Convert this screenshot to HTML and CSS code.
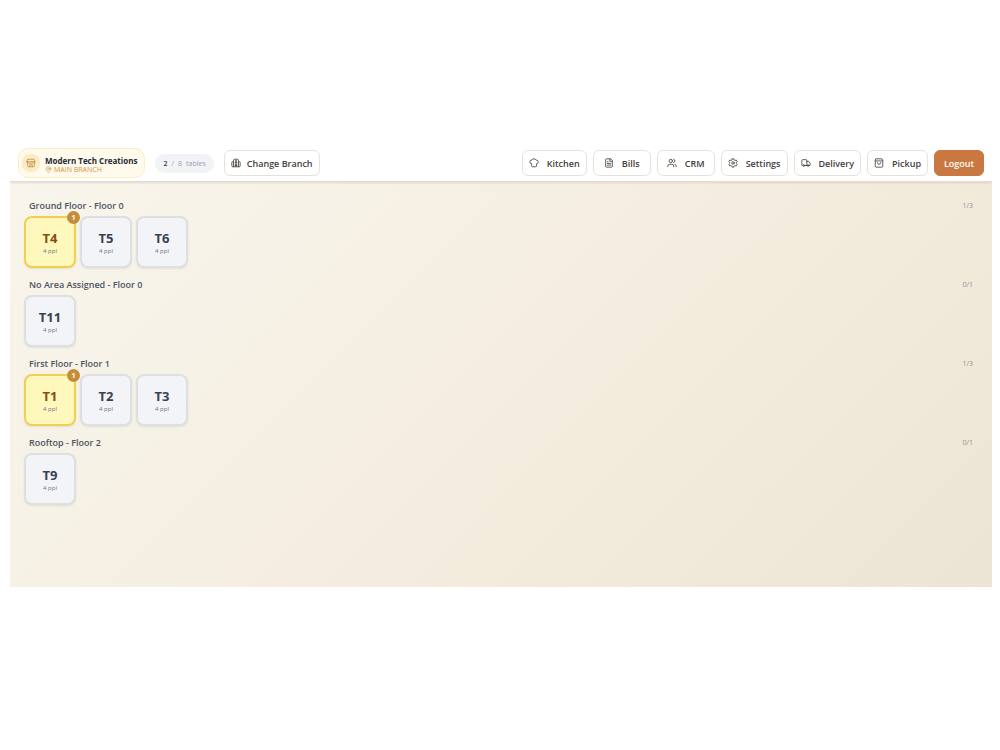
FILE: index.html
```
<!DOCTYPE html>
<html lang="en">
<head>
  <meta charset="UTF-8">
  <meta name="viewport" content="width=device-width, initial-scale=1.0">
  <title>Modern Tech Creations - Tables</title>
  <link rel="stylesheet" href="styles.css">
</head>
<body>
  <div class="app">
    <header class="topbar">
      <div class="brand">
        <span class="brand-icon">
          <svg class="icon" viewBox="0 0 24 24"><path d="M4 10v9a2 2 0 0 0 2 2h12a2 2 0 0 0 2-2v-9M5 3h14l3 6H2zM2 9a3 3 0 0 0 5 2 3 3 0 0 0 5 0 3 3 0 0 0 5 0 3 3 0 0 0 5-2M9 21v-5h6v5"/></svg>
        </span>
        <div class="brand-text">
          <h1>Modern Tech Creations</h1>
          <p>
            <svg class="icon" viewBox="0 0 24 24"><path d="M20 10c0 5-5.500 10-8 12-2.500-2-8-7-8-12a8 8 0 0 1 16 0z"/><circle cx="12" cy="10" r="3"/></svg>
            MAIN BRANCH
          </p>
        </div>
      </div>
      <div class="count"><strong>2</strong> <span>/</span> <span>8</span> <span>tables</span></div>
      <button type="button" class="btn btn-branch">
        <svg class="icon" viewBox="0 0 24 24"><path d="M6 21V6a3 3 0 0 1 3-3h6a3 3 0 0 1 3 3v15M6 9H4a2 2 0 0 0-2 2v8a2 2 0 0 0 2 2h16a2 2 0 0 0 2-2v-8a2 2 0 0 0-2-2h-2M10 7h4M10 11h4M10 15h4M10 18h4M12 6v15"/></svg>
        Change Branch
      </button>

      <nav class="actions">
        <button type="button" class="btn">
          <svg class="icon" viewBox="0 0 24 24"><path d="M6 14a4.500 4.500 0 0 1 1-9 5.500 5.500 0 0 1 10 0 4.500 4.500 0 0 1 1 9v5a2 2 0 0 1-2 2H8a2 2 0 0 1-2-2z"/></svg>
          Kitchen
        </button>
        <button type="button" class="btn">
          <svg class="icon" viewBox="0 0 24 24"><path d="M15 2H6a2 2 0 0 0-2 2v16a2 2 0 0 0 2 2h12a2 2 0 0 0 2-2V7zM14 2v6h6M8 9h2M8 13h8M8 17h8"/></svg>
          Bills
        </button>
        <button type="button" class="btn">
          <svg class="icon" viewBox="0 0 24 24"><path d="M16 21v-2a4 4 0 0 0-4-4H6a4 4 0 0 0-4 4v2M22 21v-2a4 4 0 0 0-3-3.900M16 3.100a4 4 0 0 1 0 7.800"/><circle cx="9" cy="7" r="4"/></svg>
          CRM
        </button>
        <button type="button" class="btn">
          <svg class="icon" viewBox="0 0 24 24"><path d="M10 2h4l1 3 2 1 3-1 2 4-2 2v2l2 2-2 4-3-1-2 1-1 3h-4l-1-3-2-1-3 1-2-4 2-2v-2L2 9l2-4 3 1 2-1z"/><circle cx="12" cy="12" r="3"/></svg>
          Settings
        </button>
        <button type="button" class="btn">
          <svg class="icon" viewBox="0 0 24 24"><path d="M14 18V6a2 2 0 0 0-2-2H4a2 2 0 0 0-2 2v11a1 1 0 0 0 1 1h2M15 18H9M19 18h2a1 1 0 0 0 1-1v-4l-4-5h-4"/><circle cx="17" cy="18" r="2"/><circle cx="7" cy="18" r="2"/></svg>
          Delivery
        </button>
        <button type="button" class="btn">
          <svg class="icon" viewBox="0 0 24 24"><path d="M5 2h14l2 4v14a2 2 0 0 1-2 2H5a2 2 0 0 1-2-2V6zM3 7h18M8 11a4 4 0 0 0 8 0"/></svg>
          Pickup
        </button>
        <button type="button" class="btn btn-logout">Logout</button>
      </nav>
    </header>

    <main class="floors">
      <section class="floor">
        <div class="floor-head">
          <h2>Ground Floor - Floor 0</h2>
          <span class="floor-count">1/3</span>
        </div>
        <div class="tables">
          <button type="button" class="table busy">T4 <small>4 ppl</small><span class="badge">1</span></button>
          <button type="button" class="table">T5 <small>4 ppl</small></button>
          <button type="button" class="table">T6 <small>4 ppl</small></button>
        </div>
      </section>

      <section class="floor">
        <div class="floor-head">
          <h2>No Area Assigned - Floor 0</h2>
          <span class="floor-count">0/1</span>
        </div>
        <div class="tables">
          <button type="button" class="table">T11 <small>4 ppl</small></button>
        </div>
      </section>

      <section class="floor">
        <div class="floor-head">
          <h2>First Floor - Floor 1</h2>
          <span class="floor-count">1/3</span>
        </div>
        <div class="tables">
          <button type="button" class="table busy">T1 <small>4 ppl</small><span class="badge">1</span></button>
          <button type="button" class="table">T2 <small>4 ppl</small></button>
          <button type="button" class="table">T3 <small>4 ppl</small></button>
        </div>
      </section>

      <section class="floor">
        <div class="floor-head">
          <h2>Rooftop - Floor 2</h2>
          <span class="floor-count">0/1</span>
        </div>
        <div class="tables">
          <button type="button" class="table">T9 <small>4 ppl</small></button>
        </div>
      </section>
    </main>
  </div>
</body>
</html>
```
FILE: styles.css
```
* {
  box-sizing: border-box;
}

body {
  margin: 0;
  background: #fff;
  color: #374151;
  font-family: 'Open Sans', 'Noto Sans', sans-serif;
}

h1, h2, p {
  margin: 0;
}

button {
  font-family: inherit;
  cursor: pointer;
}

.app {
  padding: 144px 8px 0 10px;
}

.icon {
  width: 10px;
  height: 10px;
  flex: none;
  fill: none;
  stroke: currentColor;
  stroke-width: 2;
  stroke-linecap: round;
  stroke-linejoin: round;
}

/* Top bar */
.topbar {
  position: relative;
  display: flex;
  align-items: center;
  padding: 4px 8px 3px;
  background: #fff;
  border-bottom: 1px solid #e3dccf;
  box-shadow: 0 2px 2px -1px rgba(90, 70, 40, 0.15);
}

.brand {
  display: flex;
  align-items: center;
  gap: 5px;
  height: 30px;
  padding: 0 7px 0 3px;
  border: 1px solid #fbedc4;
  border-radius: 10px;
  background: #fffaeb;
}

.brand-icon {
  display: flex;
  align-items: center;
  justify-content: center;
  width: 18px;
  height: 18px;
  border-radius: 8px;
  background: #fbecc8;
  color: #c8923f;
}

.brand-text {
  padding-top: 2px;
}

.brand-text h1 {
  color: #1f2937;
  font-size: 8px;
  font-weight: 700;
  line-height: 11px;
}

.brand-text p {
  display: flex;
  align-items: center;
  gap: 2px;
  color: #cd9545;
  font-size: 7px;
  font-weight: 500;
  line-height: 8px;
}

.brand-text .icon {
  width: 7px;
  height: 7px;
}

.count {
  display: flex;
  align-items: center;
  gap: 4px;
  height: 19px;
  margin: 0 10px;
  padding: 0 8px;
  border-radius: 10px;
  background: #f1f3f6;
  color: #9ca3af;
  font-size: 7px;
}

.count strong {
  color: #374151;
  font-weight: 600;
}

.btn {
  display: flex;
  align-items: center;
  justify-content: center;
  gap: 8px;
  min-width: 58px;
  height: 26px;
  padding: 0 6px;
  border: 1px solid #e6e2d8;
  border-radius: 6px;
  background: #fff;
  color: #44403c;
  font-size: 9px;
  font-weight: 600;
  white-space: nowrap;
}

.btn-branch {
  gap: 6px;
}

.actions {
  display: flex;
  gap: 6px;
  margin-left: auto;
}

.btn-logout {
  min-width: 50px;
  border-color: #c97841;
  background: #c97841;
  color: #fff;
}

/* Floors */
.floors {
  display: flex;
  flex-direction: column;
  gap: 8px;
  min-height: 54vh;
  padding: 15px 14px;
  background: linear-gradient(135deg, #f8f5ec 0%, #f5eee0 50%, #ece5d5 100%);
}

.floor-head {
  display: flex;
  align-items: center;
  justify-content: space-between;
  height: 16px;
  margin-bottom: 3px;
  padding: 0 5px;
}

.floor-head h2 {
  color: #4b5563;
  font-size: 9px;
  font-weight: 600;
}

.floor-count {
  color: #8d9096;
  font-size: 7px;
}

.tables {
  display: flex;
  flex-wrap: wrap;
  gap: 4px;
}

.table {
  position: relative;
  display: flex;
  flex-direction: column;
  align-items: center;
  justify-content: center;
  width: 52px;
  height: 52px;
  padding: 0;
  border: 2px solid #dddfe1;
  border-radius: 8px;
  background: #f2f4f8;
  box-shadow: 0 1px 2px rgba(0, 0, 0, 0.08);
  color: #374151;
  font-size: 13px;
  font-weight: 700;
  line-height: 18px;
}

.table small {
  color: #6b7280;
  font-size: 6px;
  font-weight: 400;
  line-height: 8px;
}

.table.busy {
  border-color: #f2d04f;
  background: #fef8bd;
  color: #854d0e;
}

.badge {
  position: absolute;
  top: -7px;
  right: -6px;
  width: 13px;
  height: 13px;
  border-radius: 50%;
  background: #c58d37;
  color: #fff;
  font-size: 7px;
  line-height: 13px;
  text-align: center;
}
```
